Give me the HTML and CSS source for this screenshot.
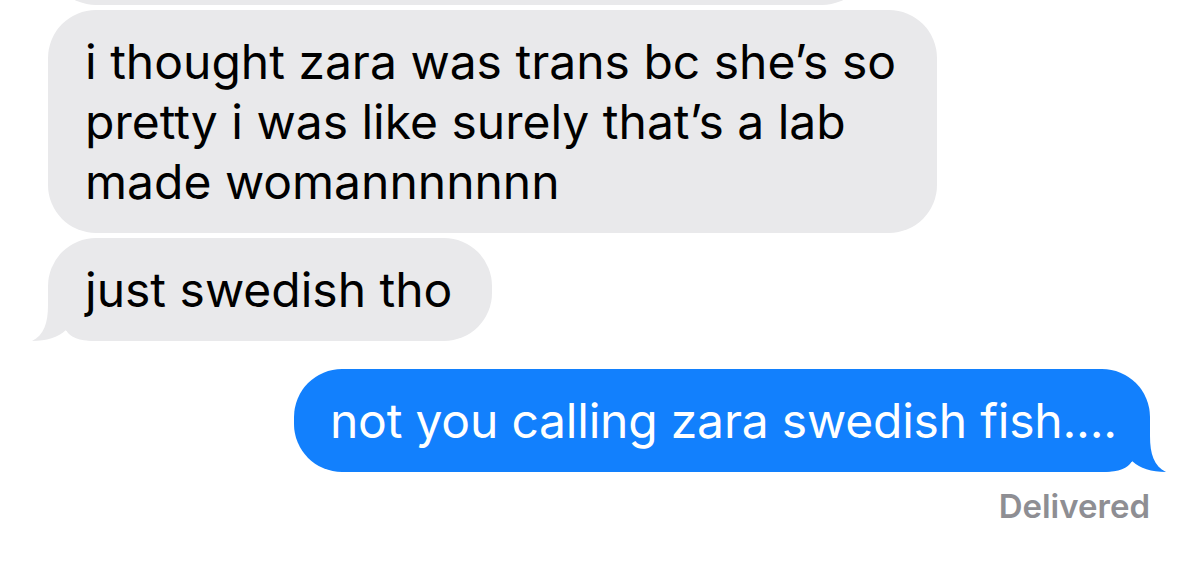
FILE: index.html
```html
<!DOCTYPE html>
<html lang="en">
<head>
<meta charset="utf-8">
<title>Messages</title>
<link rel="stylesheet" href="styles.css">
</head>
<body>
<main class="thread">
  <div class="bubble received earlier" aria-hidden="true"></div>
  <div class="bubble received">i thought zara was trans bc she’s so pretty i was like surely that’s a lab made womannnnnnn</div>
  <div class="bubble received tailed">just swedish tho<svg class="tail" viewBox="0 0 70 50" aria-hidden="true"><path d="M16,0 L16,14 C16,32 12,44 0,50 Q22,50 34,39 Q40,50 62,50 L70,50 L70,0 Z"/></svg></div>
  <div class="bubble sent tailed">not you calling zara swedish fish....<svg class="tail" viewBox="0 0 70 50" aria-hidden="true"><path d="M16,0 L16,14 C16,32 12,44 0,50 Q22,50 34,39 Q40,50 62,50 L70,50 L70,0 Z"/></svg></div>
  <div class="status">Delivered</div>
</main>
</body>
</html>
```

FILE: styles.css
```css
html, body {
  margin: 0;
  background: #ffffff;
}

body {
  font-family: Inter, "Liberation Sans", Arial, sans-serif;
  overflow: hidden;
}

.thread {
  display: flex;
  flex-direction: column;
  align-items: flex-start;
  padding: 0 50px 0 48px;
}

.bubble {
  position: relative;
  z-index: 0;
  box-sizing: border-box;
  max-width: 889px;
  padding: 22px 40px 21px 37px;
  border-radius: 48px;
  font-size: 48px;
  line-height: 60px;
  letter-spacing: 0;
}

.received {
  background: #e9e9eb;
  color: #000000;
}

.earlier {
  width: 822px;
  height: 100px;
  margin-top: -95px;
}

.received + .received {
  margin-top: 5px;
}

.sent {
  align-self: flex-end;
  margin-top: 28px;
  padding: 22px 33px 21px 36px;
  background: #1280fd;
  color: #ffffff;
  letter-spacing: -0.2px;
}

.tail {
  position: absolute;
  z-index: -1;
  bottom: 0;
  width: 70px;
  height: 50px;
}

.received .tail {
  left: -16px;
  fill: #e9e9eb;
}

.sent .tail {
  right: -16px;
  transform: scaleX(-1);
  fill: #1280fd;
}

.status {
  align-self: flex-end;
  margin-top: 16px;
  font-size: 33px;
  line-height: 36px;
  font-weight: 600;
  color: #8e8e93;
}
```
